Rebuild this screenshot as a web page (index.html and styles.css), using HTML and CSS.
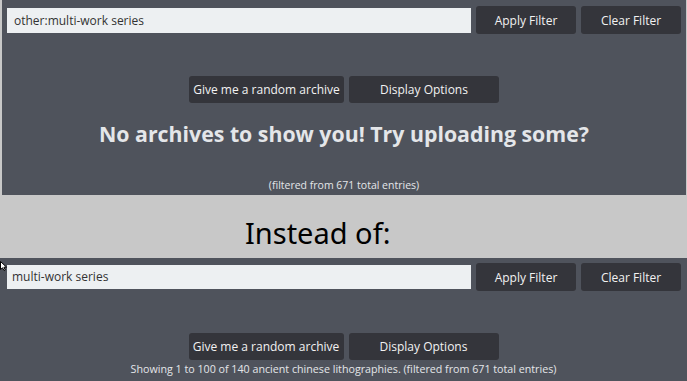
FILE: index.html
```html
<!DOCTYPE html>
<html>
<head>
<meta charset="utf-8">
<link rel="stylesheet" href="styles.css">
</head>
<body>
<div class="page">
  <section class="panel panel-top">
    <div class="filter-row">
      <div class="search">other:multi-work series</div>
      <button class="btn btn-filter">Apply Filter</button>
      <button class="btn btn-filter">Clear Filter</button>
    </div>
    <div class="action-row">
      <button class="btn btn-random">Give me a random archive</button>
      <button class="btn btn-options">Display Options</button>
    </div>
    <h1 class="empty">No archives to show you! Try uploading some?</h1>
    <div class="info info-top">(filtered from 671 total entries)</div>
  </section>
  <div class="band">Instead of:</div>
  <section class="panel panel-bottom">
    <svg class="cursor" width="8" height="10" viewBox="0 0 8 10"><path d="M0.5 0.5 L0.5 8.5 L2.5 6.8 L4 9.5 L5.3 8.9 L3.9 6.2 L6.6 6.2 Z" fill="#fff" stroke="#000" stroke-width="1"/></svg>
    <div class="filter-row">
      <div class="search search-b">multi-work series</div>
      <button class="btn btn-filter">Apply Filter</button>
      <button class="btn btn-filter">Clear Filter</button>
    </div>
    <div class="action-row action-row-b">
      <button class="btn btn-random">Give me a random archive</button>
      <button class="btn btn-options">Display Options</button>
    </div>
    <div class="info info-bottom">Showing 1 to 100 of 140 ancient chinese lithographies. (filtered from 671 total entries)</div>
  </section>
</div>
</body>
</html>
```
FILE: styles.css
```css
html, body {
  margin: 0;
  padding: 0;
  background: #c8c8c8;
  font-family: "Open Sans", "Liberation Sans", sans-serif;
}
.page {
  width: 687px;
  height: 381px;
  overflow: hidden;
  display: flex;
  flex-direction: column;
}
.panel {
  background: #4f535c;
  position: relative;
}
.panel-top {
  margin-left: 2px;
  width: 684px;
  height: 195px;
  box-sizing: border-box;
  padding-top: 6px;
}
.panel-bottom {
  width: 687px;
  height: 123px;
  box-sizing: border-box;
  padding-top: 5px;
}
.filter-row {
  display: flex;
  align-items: center;
  gap: 5px;
  padding-left: 5px;
}
.panel-bottom .filter-row {
  padding-left: 7px;
}
.search {
  width: 457px;
  height: 25px;
  background: #edf0f2;
  color: #333;
  font-size: 12px;
  line-height: 25px;
  padding-left: 7px;
  box-sizing: content-box;
}
.search-b {
  padding-left: 5px;
  width: 459px;
  height: 24px;
  line-height: 24px;
}
.btn {
  background: #34353b;
  color: #f2f2f2;
  border: none;
  border-radius: 3px;
  font-family: "Open Sans", "Liberation Sans", sans-serif;
  font-size: 12px;
  padding: 0;
  height: 28px;
}
.btn-filter {
  width: 100px;
}
.action-row {
  display: flex;
  justify-content: center;
  gap: 5px;
  margin-top: 42px;
}
.action-row-b {
  margin-top: 42px;
}
.btn-random {
  width: 155px;
  height: 27px;
}
.btn-options {
  width: 150px;
  height: 27px;
}
.empty {
  margin: 16px 0 0 0;
  text-align: center;
  font-size: 21.3px;
  font-weight: 700;
  color: #e4e6e9;
  line-height: 30px;
}
.info {
  text-align: center;
  font-size: 10.5px;
  color: #e4e6e9;
}
.info-top {
  margin-top: 29px;
}
.info-bottom {
  margin-top: 2px;
  font-size: 10.7px;
}
.band {
  height: 63px;
  display: flex;
  align-items: center;
  justify-content: flex-start;
  padding-left: 245px;
  font-family: "Noto Sans", "Open Sans", sans-serif;
  font-size: 29px;
  color: #000;
  padding-top: 11px;
  box-sizing: border-box;
}
.cursor {
  position: absolute;
  left: 0;
  top: 3px;
}
```
